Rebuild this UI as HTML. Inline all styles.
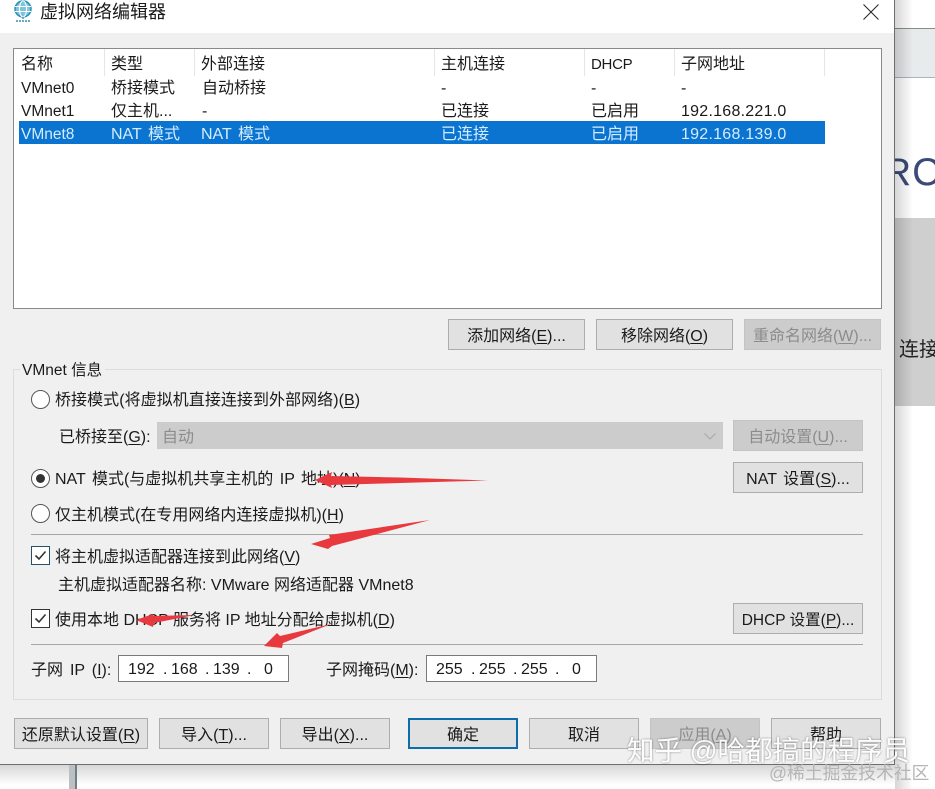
<!DOCTYPE html>
<html><head><meta charset="utf-8">
<style>
html,body{margin:0;padding:0;background:#fff}
#p{position:relative;width:935px;height:789px;overflow:hidden;background:#fff;font-family:"Liberation Sans","Noto Sans CJK SC",sans-serif;color:#1a1a1a;font-size:16px;filter:blur(.25px)}
.a{position:absolute;white-space:nowrap}
.t{position:absolute;white-space:nowrap;line-height:24px;height:24px;margin-top:2px}
.b{position:absolute;box-sizing:border-box;background:#e1e1e1;border:1px solid #adadad;text-align:center;white-space:nowrap;font-size:16px;line-height:33px;height:31px;color:#1a1a1a}
.d{background:#cccccc;border-color:#c4c4c4;color:#8c8c8c}
u{text-underline-offset:2px;text-decoration-thickness:1px}
.h{position:absolute;top:49px;width:1px;height:27px;background:#e5e5e5}
.r{position:absolute;box-sizing:border-box;width:19px;height:19px;border-radius:50%;border:1.5px solid #555;background:#fff}
.c{position:absolute;box-sizing:border-box;width:19px;height:19px;border:1.5px solid #333;background:#fff}
.ip{position:absolute;box-sizing:border-box;height:27px;background:#fff;border:1px solid #7a7a7a;font-size:16px;line-height:27px;white-space:pre;color:#1a1a1a}
.ip span{line-height:27px}
.n{letter-spacing:.25px}
.w{word-spacing:2px}
.s{font-size:15.5px}
</style></head><body><div id="p">
<!-- background right -->
<div class="a" style="left:895px;top:28px;width:40px;height:50px;background:#e8ebec;border-top:1px solid #8b8b8b;border-bottom:1px solid #a9b4bb;box-sizing:border-box"></div>
<div class="a" style="left:895px;top:218px;width:40px;height:188px;background:#cfcfcf"></div>
<div class="a" style="left:883px;top:148px;font-size:39px;line-height:50px;color:#3b4a78;letter-spacing:1px">RC</div>
<div class="t" style="left:899px;top:336px;font-size:20px;color:#222">连接</div>
<div class="a" style="left:895px;top:0;width:18px;height:789px;background:linear-gradient(90deg,rgba(0,0,0,.16),rgba(0,0,0,0))"></div>
<div class="a" style="left:0;top:765px;width:895px;height:20px;background:linear-gradient(180deg,rgba(0,0,0,.16),rgba(0,0,0,0))"></div>
<div class="a" style="left:69px;top:765px;width:8px;height:24px;background:#bcc0c2;border-right:2px solid #6f7f87;box-sizing:border-box"></div>
<!-- dialog -->
<div class="a" style="left:0;top:0;width:895px;height:765px;background:#f0f0f0;border-right:1px solid #6e6e6e;border-bottom:1px solid #6e6e6e;box-sizing:border-box"></div>
<div class="a" style="left:0;top:0;width:894px;height:33px;background:#fff"></div>
<svg class="a" style="left:13px;top:0" width="21" height="23" viewBox="0 0 21 23"><circle cx="10" cy="9" r="8" fill="#7fc4dc" stroke="#1f8eb0" stroke-width="1.4"/><ellipse cx="10" cy="9" rx="3.6" ry="8" fill="none" stroke="#fff" stroke-width="1.1"/><path d="M2 6.5h16M2 11.5h16" stroke="#fff" stroke-width="1.1"/><path d="M10 17v3M3 21h14" stroke="#3f8ea6" stroke-width="1.4" stroke-dasharray="2 1"/></svg>
<div class="t" style="left:40px;top:-2px;font-size:18px">虚拟网络编辑器</div>
<svg class="a" style="left:862px;top:3px" width="18" height="18" viewBox="0 0 18 18"><path d="M1.5 1.5L16.5 16.5M16.5 1.5L1.5 16.5" stroke="#222" stroke-width="1" fill="none"/></svg>
<!-- list -->
<div class="a" style="left:13px;top:48px;width:869px;height:261px;background:#fff;border:1px solid #8a8a8a;box-sizing:border-box"></div>
<div class="h" style="left:104px"></div><div class="h" style="left:194px"></div><div class="h" style="left:434px"></div><div class="h" style="left:584px"></div><div class="h" style="left:674px"></div><div class="h" style="left:824px"></div>
<div class="t" style="left:21px;top:51px">名称</div><div class="t" style="left:111px;top:51px">类型</div><div class="t" style="left:201px;top:51px">外部连接</div><div class="t" style="left:441px;top:51px">主机连接</div><div class="t" style="left:591px;top:51px;font-size:15px;letter-spacing:-.3px">DHCP</div><div class="t" style="left:681px;top:51px">子网地址</div>
<div class="t s" style="left:21px;top:75px">VMnet0</div><div class="t" style="left:111px;top:75px">桥接模式</div><div class="t" style="left:202px;top:75px">自动桥接</div><div class="t" style="left:441px;top:75px">-</div><div class="t" style="left:591px;top:75px">-</div><div class="t" style="left:681px;top:75px">-</div>
<div class="t s" style="left:21px;top:98px">VMnet1</div><div class="t" style="left:111px;top:98px">仅主机...</div><div class="t" style="left:202px;top:98px">-</div><div class="t" style="left:441px;top:98px">已连接</div><div class="t" style="left:591px;top:98px">已启用</div><div class="t n" style="left:681px;top:98px">192.168.221.0</div>
<div class="a" style="left:19px;top:121px;width:806px;height:23px;background:#0a74d0"></div>
<div style="color:#d4ecff">
<div class="t s" style="left:21px;top:121px">VMnet8</div><div class="t w" style="left:111px;top:121px">NAT 模式</div><div class="t w" style="left:201px;top:121px">NAT 模式</div><div class="t" style="left:441px;top:121px">已连接</div><div class="t" style="left:591px;top:121px">已启用</div><div class="t n" style="left:681px;top:121px">192.168.139.0</div>
</div>
<!-- top buttons -->
<div class="b" style="left:448px;top:319px;width:137px">添加网络(<u>E</u>)...</div>
<div class="b" style="left:596px;top:319px;width:137px">移除网络(<u>O</u>)</div>
<div class="b d" style="left:744px;top:319px;width:137px">重命名网络(<u>W</u>)...</div>
<!-- group -->
<div class="a" style="left:13px;top:369px;width:869px;height:331px;border:1px solid #dcdcdc;box-sizing:border-box"></div>
<div class="t s" style="left:20px;top:357px;background:#f0f0f0;padding:0 3px 0 2px">VMnet 信息</div>
<div class="r" style="left:31px;top:390px"></div>
<div class="t" style="left:55px;top:387px;letter-spacing:.05px">桥接模式(将虚拟机直接连接到外部网络)(<u>B</u>)</div>
<div class="t" style="left:59px;top:424px">已桥接至(<u>G</u>):</div>
<div class="a" style="left:157px;top:422px;width:566px;height:27px;background:#cccccc"></div>
<div class="t" style="left:162px;top:424px;color:#8c8c8c">自动</div>
<svg class="a" style="left:703px;top:432px" width="14" height="9" viewBox="0 0 14 9"><path d="M1.5 1.5L7 7L12.5 1.5" stroke="#a8a8a8" fill="none" stroke-width="1"/></svg>
<div class="b d" style="left:733px;top:420px;width:130px">自动设置(<u>U</u>)...</div>
<div class="r" style="left:31px;top:469px"></div><div class="a" style="left:36px;top:474px;width:9px;height:9px;border-radius:50%;background:#333"></div>
<div class="t w" style="left:55px;top:466px">NAT 模式(与虚拟机共享主机的 IP 地址)(<u>N</u>)</div>
<div class="b w" style="left:733px;top:462px;width:130px">NAT 设置(<u>S</u>)...</div>
<div class="r" style="left:31px;top:504px"></div>
<div class="t" style="left:55px;top:502px">仅主机模式(在专用网络内连接虚拟机)(<u>H</u>)</div>
<div class="a" style="left:31px;top:534px;width:832px;height:1px;background:#a6a6a6"></div>
<div class="c" style="left:31px;top:546px;border-color:#2b4f63"></div>
<svg class="a" style="left:31px;top:546px" width="19" height="19" viewBox="0 0 19 19"><path d="M4.5 9.5L8 13L14.5 5.5" stroke="#333" stroke-width="1.6" fill="none"/></svg>
<div class="t" style="left:55px;top:544px">将主机虚拟适配器连接到此网络(<u>V</u>)</div>
<div class="t" style="left:58px;top:572px">主机虚拟适配器名称: VMware 网络适配器 VMnet8</div>
<div class="c" style="left:31px;top:609px"></div>
<svg class="a" style="left:31px;top:609px" width="19" height="19" viewBox="0 0 19 19"><path d="M4.5 9.5L8 13L14.5 5.5" stroke="#333" stroke-width="1.6" fill="none"/></svg>
<div class="t" style="left:55px;top:607px">使用本地 DHCP 服务将 IP 地址分配给虚拟机(<u>D</u>)</div>
<div class="b s" style="left:733px;top:603px;width:130px">DHCP 设置(<u>P</u>)...</div>
<div class="a" style="left:31px;top:644px;width:832px;height:1px;background:#a6a6a6"></div>
<div class="t" style="left:31px;top:657px;word-spacing:2.5px">子网 IP (<u>I</u>):</div>
<div class="ip" style="left:118px;top:655px;width:171px"><span class="a" style="left:9px">192</span><span class="a" style="left:44px">.</span><span class="a" style="left:52px">168</span><span class="a" style="left:86px">.</span><span class="a" style="left:94px">139</span><span class="a" style="left:128px">.</span><span class="a" style="left:145px">0</span></div>
<div class="t" style="left:326px;top:657px">子网掩码(<u>M</u>):</div>
<div class="ip" style="left:426px;top:655px;width:171px"><span class="a" style="left:9px">255</span><span class="a" style="left:44px">.</span><span class="a" style="left:52px">255</span><span class="a" style="left:86px">.</span><span class="a" style="left:94px">255</span><span class="a" style="left:128px">.</span><span class="a" style="left:145px">0</span></div>
<!-- bottom buttons -->
<div class="b" style="left:14px;top:718px;width:134px">还原默认设置(<u>R</u>)</div>
<div class="b" style="left:159px;top:718px;width:110px">导入(<u>T</u>)...</div>
<div class="b" style="left:280px;top:718px;width:110px">导出(<u>X</u>)...</div>
<div class="b" style="left:408px;top:718px;width:110px;border:2px solid #0f6cab;line-height:31px">确定</div>
<div class="b" style="left:529px;top:718px;width:110px">取消</div>
<div class="b d" style="left:650px;top:718px;width:110px">应用(<u>A</u>)</div>
<div class="b" style="left:771px;top:718px;width:110px">帮助</div>
<!-- arrows -->
<svg class="a" style="left:0;top:0" width="935" height="789" viewBox="0 0 935 789">
<g fill="#e8393f">
<path d="M315 480L332 472L331 476L400 477.5L488 480.5L400 483L331 485L332 488Z"/>
<path d="M311 544L330 538L329 535L430 520L332 546L328 549Z"/>
<path d="M136 620L153 614L153 616L195 615L154 623L153 627Z"/>
<path d="M264 646L277 633L280 636L331 624L283 643L282 648Z"/>
</g>
</svg>
<!-- watermarks -->
<div class="t" style="left:627px;top:731px;font-size:27.5px;line-height:36px;height:36px;color:#fff;opacity:.92;text-shadow:0 0 2px rgba(0,0,0,.5)">知乎 @哈都搞的程序员</div>
<div class="t" style="left:769px;top:760px;font-size:17.8px;line-height:22px;height:22px;color:#b5b5b5">@稀土掘金技术社区</div>
</div></body></html>
